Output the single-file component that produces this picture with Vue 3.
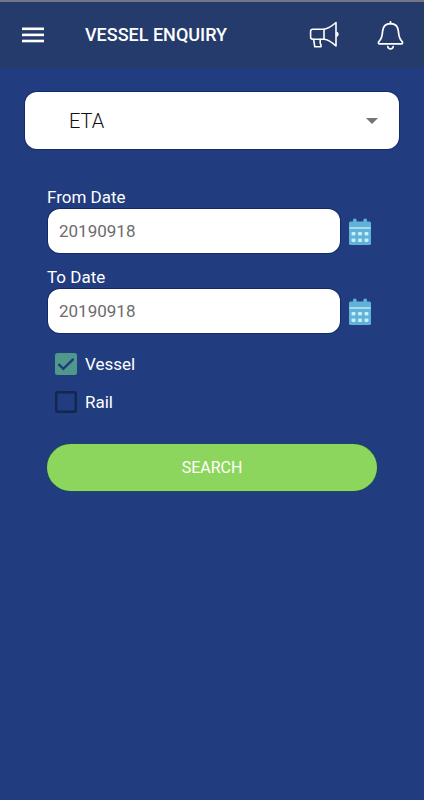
<template>
  <div class="page">
    <!-- Header -->
    <header class="app-bar">
      <button class="icon-btn" type="button" aria-label="Menu">
        <svg width="22" height="16" viewBox="0 0 22 16" fill="#fff">
          <rect x="0" y="0.5" width="22" height="2.6" />
          <rect x="0" y="6.6" width="22" height="2.6" />
          <rect x="0" y="12.7" width="22" height="2.6" />
        </svg>
      </button>
      <h1 class="title">VESSEL ENQUIRY</h1>
      <div class="actions">
        <button class="icon-btn" type="button" aria-label="Announcements">
          <svg width="30" height="28" viewBox="0 0 30 28" fill="none" stroke="#fff" stroke-width="1.6" stroke-linejoin="round" stroke-linecap="round">
            <path d="M15 8.2H3.8Q1.6 8.2 1.6 10.4V16Q1.6 18.2 3.8 18.2H15Z" />
            <path d="M15 8.2C19.5 7.6 23 5 27 1.5V25C23 21.3 19.5 18.6 15 18.2" />
            <path d="M4.6 18.2L5.8 25.8H12V24L11.2 22.2V18.2" />
            <path d="M28 11.5Q29.8 13.2 28 15Z" fill="#fff" />
          </svg>
        </button>
        <button class="icon-btn" type="button" aria-label="Notifications">
          <svg width="27" height="29" viewBox="0 0 28 30" fill="none" stroke="#fff" stroke-width="1.8" stroke-linejoin="round" stroke-linecap="round">
            <path d="M14 2.8C9 2.8 6.2 6.2 5.8 10.5C5.4 15.5 5.4 18 2.3 20.8C1 22 1.3 23.8 3 23.8H25C26.7 23.8 27 22 25.7 20.8C22.6 18 22.6 15.5 22.2 10.5C21.8 6.2 19 2.8 14 2.8Z" />
            <path d="M14 1V2.6" stroke-width="2" />
            <path d="M11.2 26.5Q11.7 28.8 14 28.8Q16.3 28.8 16.8 26.5" />
          </svg>
        </button>
      </div>
    </header>

    <main class="content">
      <div class="select-box">
        <select v-model="searchBy" class="select" aria-label="Search by">
          <option v-for="item in options" :key="item" :value="item">{{ item }}</option>
        </select>
        <svg class="arrow" width="12" height="6" viewBox="0 0 12 6"><path d="M0 0H12L6 6Z" fill="#757575" /></svg>
      </div>

      <form class="form" @submit.prevent>
        <div v-for="field in fields" :key="field.id" class="field">
          <label class="field-label" :for="field.id">{{ field.label }}</label>
          <div class="field-row">
            <input :id="field.id" v-model="field.value" class="text-input" type="text" />
            <button class="icon-btn" type="button" :aria-label="'Pick ' + field.label">
              <svg width="24" height="30" viewBox="0 0 24 30">
                <rect x="1" y="5.5" width="22" height="23.5" rx="1.5" fill="#62b1d9" />
                <rect x="5" y="2.5" width="3.6" height="5" rx="1.5" fill="#62b1d9" />
                <rect x="15.4" y="2.5" width="3.6" height="5" rx="1.5" fill="#62b1d9" />
                <rect x="1.5" y="11" width="21" height="2" fill="#a5def0" />
                <g fill="#c4f0f8">
                  <rect x="3.5" y="16" width="4" height="3.4" rx="1" />
                  <rect x="10" y="16" width="4" height="3.4" rx="1" />
                  <rect x="16.5" y="16" width="4" height="3.4" rx="1" />
                  <rect x="3.5" y="22.5" width="4" height="3.4" rx="1" />
                  <rect x="10" y="22.5" width="4" height="3.4" rx="1" />
                  <rect x="16.5" y="22.5" width="4" height="3.4" rx="1" />
                </g>
              </svg>
            </button>
          </div>
        </div>

        <div class="checks">
          <label v-for="type in types" :key="type.name" class="check">
            <input v-model="type.checked" class="check-input" type="checkbox" />
            <svg class="check-icon" width="22" height="22" viewBox="0 0 22 22">
              <template v-if="type.checked">
                <rect width="22" height="22" rx="2.5" fill="#50978c" />
                <path d="M3.5 11.2L8.3 15.8L18.5 5.8" fill="none" stroke="#213c7d" stroke-width="2.4" />
              </template>
              <rect v-else x="1.2" y="1.2" width="19.6" height="19.6" rx="1.5" fill="none" stroke="#14254f" stroke-width="2.4" />
            </svg>
            <span>{{ type.name }}</span>
          </label>
        </div>

        <button class="search-btn" type="submit">SEARCH</button>
      </form>
    </main>
  </div>
</template>

<script setup>
import { ref } from 'vue';

const options = ['ETA'];
const searchBy = ref('ETA');

const fields = ref([
  { id: 'from-date', label: 'From Date', value: '20190918' },
  { id: 'to-date', label: 'To Date', value: '20190918' }
]);

const types = ref([
  { name: 'Vessel', checked: true },
  { name: 'Rail', checked: false }
]);
</script>

<style>
body {
  margin: 0;
  background: #213c7f;
}
</style>

<style scoped>
.page {
  min-height: 100vh;
  background: #213c7f;
  color: #fff;
  font-family: Roboto, "Liberation Sans", sans-serif;
}

button,
input,
select {
  font-family: inherit;
}

svg {
  display: block;
}

.icon-btn {
  padding: 0;
  border: none;
  background: transparent;
  cursor: pointer;
}

/* Header */
.app-bar {
  display: flex;
  align-items: center;
  box-sizing: border-box;
  height: 68px;
  padding: 0 20px 0 22px;
  border-top: 2px solid #737783;
  background: #243b6b;
}

.title {
  margin: 0 0 0 41px;
  font-size: 18px;
  font-weight: 500;
  line-height: 20px;
}

.actions {
  display: flex;
  align-items: center;
  gap: 38px;
  margin-left: auto;
}

/* Drop-down */
.content {
  padding: 24px 25px;
}

.select-box {
  position: relative;
}

.select {
  display: block;
  width: 100%;
  height: 57px;
  padding: 0 44px;
  border: none;
  border-radius: 12px;
  background: #fff;
  box-shadow: 0 0 0 1px #14296c;
  color: #111;
  font-size: 20px;
  font-weight: 300;
  appearance: none;
}

.arrow {
  position: absolute;
  top: 50%;
  right: 21px;
  margin-top: -3px;
  pointer-events: none;
}

/* Form */
.form {
  padding: 36px 22px 0;
}

.field {
  margin-bottom: 12px;
}

.field-label {
  display: block;
  font-size: 17px;
  line-height: 24px;
}

.field-row {
  display: flex;
  align-items: center;
  gap: 8px;
  padding: 0 5px 0 1px;
}

.text-input {
  flex: 1;
  min-width: 0;
  box-sizing: border-box;
  height: 44px;
  padding: 0 11px;
  border: none;
  border-radius: 12px;
  background: #fff;
  box-shadow: 0 0 0 1px #14296c;
  color: #6c6c6c;
  font-size: 17px;
}

.checks {
  padding-left: 8px;
}

.check {
  display: flex;
  align-items: center;
  gap: 8px;
  height: 38px;
  font-size: 17px;
}

.check-input {
  position: absolute;
  width: 22px;
  height: 22px;
  margin: 0;
  opacity: 0;
}

.search-btn {
  display: block;
  width: 100%;
  height: 47px;
  margin-top: 23px;
  border: none;
  border-radius: 24px;
  background: #8cd65d;
  box-shadow: 0 0 0 1px #1d4a5c;
  color: #fff;
  font-size: 16px;
  cursor: pointer;
}
</style>
